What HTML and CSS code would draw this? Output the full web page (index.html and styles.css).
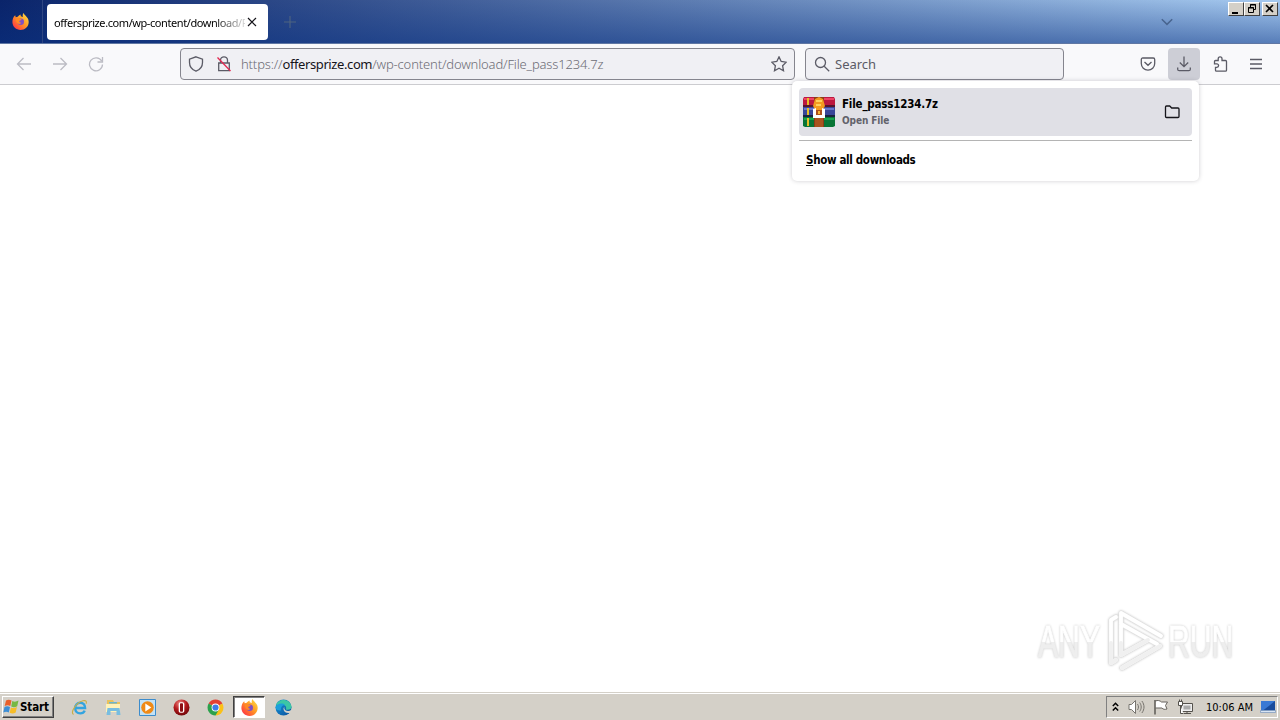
FILE: index.html
```
<!DOCTYPE html>
<html lang="en">
<head>
    <meta charset="UTF-8">
    <meta name="viewport" content="width=device-width, initial-scale=1.0">
    <title>Downloads</title>
    <link rel="stylesheet" href="styles.css">
</head>
<body>
    <!-- shared icon shapes -->
    <svg class="defs" width="0" height="0">
        <defs>
            <linearGradient id="flame" x1="1" y1="0" x2="0" y2="1">
                <stop offset="0" stop-color="#ffe84a"/>
                <stop offset=".45" stop-color="#ff9a25"/>
                <stop offset=".8" stop-color="#ff4a3d"/>
                <stop offset="1" stop-color="#e8306c"/>
            </linearGradient>
            <linearGradient id="edgeBlue" x1="0" y1="0" x2="1" y2="1">
                <stop offset="0" stop-color="#1796d8"/>
                <stop offset="1" stop-color="#0b4f9c"/>
            </linearGradient>
            <radialGradient id="operaRed" cx=".4" cy=".25" r=".8">
                <stop offset="0" stop-color="#ef8580"/>
                <stop offset=".5" stop-color="#b3191c"/>
                <stop offset="1" stop-color="#6b0508"/>
            </radialGradient>
            <symbol id="firefox" viewBox="0 0 16 16">
                <path fill="url(#flame)" d="M.4 9C.2 6 1.3 3.4 3 2l.5 2 1.8-.4C6 2.5 7 1.8 8 1.4L8.3 3l2 .8C9.8 2.3 10.1.8 11 0c.4 1.7 1.8 2.3 3 3.9 1.2 1.2 1.8 3 1.7 4.8C15.5 13 12.2 16 8 16S.7 13 .4 9z"/>
                <circle cx="8.2" cy="8.3" r="3.1" fill="#8050c4"/>
                <path fill="#ff8a24" d="M3.4 5.2c1.4-.8 2.9-.6 4 .3l1.6.4c-.2 1-1.1 1.2-1.9 1.5-.8.5.2 1.8 1.5 1.8-.6 1.600-3.200 1.500-4.200-.4-.6-1-.9-2.200-1-3.600z"/>
            </symbol>
        </defs>
    </svg>

    <div class="window">
        <div class="titlebar">
            <div class="brand"><svg width="17" height="17"><use href="#firefox"/></svg></div>
            <div class="tab">
                <span class="tab-title">offersprize.com/wp-content/download/F</span>
                <svg width="10" height="10" viewBox="0 0 10 10"><path d="M1 1l8 8M9 1L1 9" stroke="#15141a" stroke-width="1.2"/></svg>
            </div>
            <svg class="new-tab" width="12" height="12" viewBox="0 0 12 12"><path d="M6 0v12M0 6h12" stroke="#4f6480" stroke-width="1.1"/></svg>
            <svg class="all-tabs" width="12" height="8" viewBox="0 0 12 8"><path d="M.8 1.2L6 6.4l5.2-5.2" fill="none" stroke="#49658f" stroke-width="1.5"/></svg>
            <div class="controls">
                <span class="ctl"><svg width="14" height="12" viewBox="0 0 14 12"><path d="M3 9h6v2H3z"/></svg></span>
                <span class="ctl"><svg width="14" height="12" viewBox="0 0 14 12" fill="none" stroke="#000"><path d="M5.500 4V1.500h5v5H9M5 2h6M3.500 4.500h5v5h-5zM3 5h6"/></svg></span>
                <span class="ctl close"><svg width="14" height="12" viewBox="0 0 14 12"><path d="M3 2l7 7M10 2L3 9" stroke="#000" stroke-width="1.6"/></svg></span>
            </div>
        </div>

        <div class="toolbar">
            <div class="nav">
                <svg width="16" height="16" viewBox="0 0 16 16"><path d="M15 8H1.500M7.500 2l-6 6 6 6"/></svg>
                <svg width="16" height="16" viewBox="0 0 16 16"><path d="M1 8h13.500M8.500 2l6 6-6 6"/></svg>
                <svg width="16" height="16" viewBox="0 0 16 16"><path d="M13.600 5A6.500 6.500 0 1 0 14.500 8.500M14.500 1v5h-5"/></svg>
            </div>
            <div class="field url">
                <svg class="shield" width="16" height="16" viewBox="0 0 16 16"><path d="M8 .8l6.500 2.400v3.300c0 4-2.500 7.200-6.500 8.700-4-1.500-6.500-4.700-6.500-8.700V3.200z"/></svg>
                <svg class="lock" width="16" height="16" viewBox="0 0 16 16"><path d="M4.500 7V4.300a3.500 3.500 0 0 1 7 0V7M2.700 7h10.600v7.700H2.700z"/><path class="strike" d="M1.500 1.500l13 13.500"/></svg>
                <span class="address">https://<b>offersprize.com</b>/wp-content/download/File_pass1234.7z</span>
                <svg class="star" width="16" height="16" viewBox="0 0 16 16"><path d="M8 .9l2.200 4.600 5 .7-3.600 3.500.9 5L8 12.300l-4.500 2.400.9-5L.8 6.200l5-.7z"/></svg>
            </div>
            <div class="field search">
                <svg width="16" height="16" viewBox="0 0 16 16"><circle cx="6.500" cy="6.500" r="5"/><path d="M10.200 10.200l5 5"/></svg>
                <span>Search</span>
            </div>
            <div class="actions">
                <span class="action"><svg width="16" height="16" viewBox="0 0 16 16"><path d="M2.800 2h10.400c.9 0 1.500.6 1.500 1.500v4a6.700 6.700 0 0 1-13.400 0v-4C1.300 2.600 1.900 2 2.800 2zM4.500 6L8 9.300 11.500 6"/></svg></span>
                <span class="action active"><svg width="16" height="16" viewBox="0 0 16 16"><path d="M8 .5v10M3.800 6.500L8 10.700l4.200-4.200M1.700 11.500v1.700c0 .9.600 1.500 1.500 1.500h9.600c.9 0 1.500-.6 1.500-1.500v-1.700"/></svg></span>
                <span class="action"><svg width="16" height="16" viewBox="0 0 16 16"><path d="M6.200 4.500V2.800a1.900 1.900 0 0 1 3.800 0v1.700h3.500c.6 0 1 .4 1 1v8.700c0 .6-.4 1-1 1h-9c-.6 0-1-.4-1-1v-2.900h1.400a1.700 1.700 0 0 0 0-3.400H2.500v-2.400c0-.6.400-1 1-1z"/></svg></span>
                <span class="action"><svg width="16" height="16" viewBox="0 0 16 16"><path d="M2 3.500h12M2 8h12M2 12.500h12"/></svg></span>
            </div>
        </div>

        <div class="page"></div>

        <div class="taskbar">
            <div class="start">
                <svg width="17" height="16" viewBox="0 0 17 16">
                    <path fill="#e8602c" d="M3 1.500c2-1.200 3.700-1 5.500 0L7.300 7C5.500 6 3.700 6 1.700 7.100z"/>
                    <path fill="#77b843" d="M9.300 2c2 1 3.700.9 6.200-.4L14.200 7.200c-2.300 1.200-4 1.200-6 .2z"/>
                    <path fill="#3c8ed6" d="M1.500 8c2-1.200 3.700-1 5.500 0l-1.200 5.400c-1.800-1-3.500-1-5.500.1z"/>
                    <path fill="#f7bd28" d="M7.900 8.400c2 1 3.700.9 6-.3l-1.200 5.500c-2.200 1.200-4 1.200-6 .2z"/>
                </svg>
                <span>Start</span>
            </div>
            <div class="apps">
                <span class="app"><svg width="17" height="17" viewBox="0 0 17 17" fill="none">
                    <path d="M4.200 9h9.900c0-3.200-2-5.200-4.900-5.200S4.200 6 4.200 9.200s2 5.200 5 5.200c2.200 0 3.800-1 4.500-2.800" stroke="#33a4e0" stroke-width="2.400"/>
                    <path d="M2.500 15.500C-1 13 5.500 3.500 12 1.800c3-.7 4 .5 3 3" stroke="#c9ae45" stroke-width="1.100"/>
                </svg></span>
                <span class="app"><svg width="17" height="17" viewBox="0 0 17 17">
                    <path fill="#e9c25c" d="M2 1h6l1 2h6v9H2z"/>
                    <path fill="#fff2b8" d="M1 5h14v8H1z"/>
                    <path fill="#6bb6cf" d="M4 3h8v1.500H4z"/>
                    <path fill="#78bde0" d="M2.500 9h12l1 7h-4v-4h-6v4h-4z"/>
                </svg></span>
                <span class="app"><svg width="17" height="17" viewBox="0 0 17 17">
                    <path fill="#c3e2f6" stroke="#3c8ccc" d="M.5.500h16v16H.5z"/>
                    <circle cx="8.500" cy="8.500" r="6.300" fill="#f08a16"/>
                    <path fill="#fff" d="M6.300 4.500l6 4-6 4z"/>
                </svg></span>
                <span class="app"><svg width="17" height="17" viewBox="0 0 17 17">
                    <circle cx="8.500" cy="8.500" r="8" fill="url(#operaRed)"/>
                    <rect x="5.700" y="3.300" width="5.600" height="10.500" rx="1.800" fill="#fff"/>
                    <rect x="7" y="4.300" width="3" height="8.500" rx=".8" fill="#8c0e13"/>
                </svg></span>
                <span class="app"><svg width="17" height="17" viewBox="0 0 17 17">
                    <path fill="#e34133" d="M8.500 8.500L1.600 4.500a8 8 0 0 1 13.800 0z"/>
                    <path fill="#fbc116" d="M8.500 8.500l6.900-4a8 8 0 0 1-6.900 12z"/>
                    <path fill="#2ca14c" d="M8.500 8.500l3.500 2-3.500 6a8 8 0 0 1-6.900-12z"/>
                    <circle cx="8.500" cy="8.500" r="3.900" fill="#fff"/>
                    <circle cx="8.500" cy="8.500" r="3.100" fill="#3f7de8"/>
                </svg></span>
                <span class="app current"><svg width="17" height="17"><use href="#firefox"/></svg></span>
                <span class="app"><svg width="17" height="17" viewBox="0 0 17 17">
                    <circle cx="8.500" cy="8.500" r="8" fill="url(#edgeBlue)"/>
                    <path fill="#3bc6a5" d="M1 6.500C3-.7 14.500-1 16.500 7.300c.3 3-2.300 4-5.700 3.300.9-2 .2-4.100-2-4.600-3-.7-6 .2-7.800.5z"/>
                    <path fill="#1c9edb" d="M.5 8.500C1.500 4.500 7.500 3.200 10 6c-3 .2-4.500 2.600-4 5.500C3 12 1 10.500.5 8.500z"/>
                    <path fill="#d5d1c9" d="M9.500 8c-.8 1.500.5 3.700 3 3.900 1.400.1 2.600-.2 4-1.200l.5 1.800-1.500 1.300c-3.800 1-7-1-7-3.800 0-1 .4-1.700 1-2z"/>
                </svg></span>
            </div>
            <div class="tray">
                <svg class="more" width="7" height="11" viewBox="0 0 7 11"><path d="M.8 4l2.700-2.700L6.200 4M.8 8.500l2.700-2.700 2.700 2.700" fill="none" stroke="#000" stroke-width="1.500"/></svg>
                <svg width="17" height="16" viewBox="0 0 17 16" fill="none" stroke="#77746e"><path fill="#fff" d="M1 5.500h2.500L7.500 1.500v13l-4-4H1z"/><path d="M9.500 5c1.300 2 1.300 4 0 6M11.700 3.500c2 3 2 6 0 9M13.900 2c2.800 4 2.800 8 0 12"/></svg>
                <svg width="16" height="16" viewBox="0 0 16 16"><path fill="#fff" stroke="#66635e" d="M2.500 2c2-1 4.500-.5 6 1h6l-2 3.500 1.500 3.500c-2 .6-4 .5-5-1H2.500"/><path stroke="#55524d" stroke-width="1.400" d="M2 1v14.500"/></svg>
                <svg width="17" height="16" viewBox="0 0 17 16" stroke="#55524d"><path fill="#eee" d="M4.500 4.500h11v8h-11zM7 14.500h7M10 12.500v2"/><path fill="#aaa" stroke="none" d="M6.500 6.500h7v4h-7z"/><path fill="#fff" d="M1.500 2.500h4v4h-4zM2.500.500v2M4.500.500v2M3.500 6.500v8h3"/></svg>
                <span class="clock">10:06 AM</span>
                <svg width="16" height="14" viewBox="0 0 16 14"><path fill="#194c9c" d="M1 1h14v9.500H1z"/><path fill="#3979d4" d="M1 1h14L3 10.500H1z"/><path fill="#d9e5f4" stroke="#6989b5" stroke-width=".6" d="M.5 10.500h15v2H.5z"/></svg>
            </div>
        </div>
    </div>

    <!-- downloads popup -->
    <div class="popup">
        <div class="item">
            <svg width="32" height="32" viewBox="0 0 32 32">
                <path fill="#bb1840" d="M1 1h30l1 2v7H0V3z"/><path fill="#ed4264" d="M1 2h30v2H1z"/>
                <path fill="#394699" d="M0 11h32v9H0z"/><path fill="#6775cc" d="M1 12h30v2H1z"/>
                <path fill="#087536" d="M0 21h32v9l-2 1H2l-2-1z"/><path fill="#18a24d" d="M1 22h30v2H1z"/>
                <path fill="#55152d" d="M0 9h32v2H0z"/><path fill="#18243f" d="M0 19h32v2H0z"/>
                <path stroke="#e6be25" stroke-width="2" d="M5 2v7M5 12v7M5 22v8"/>
                <path fill="#8c3d17" d="M11 1h10v30H11z"/>
                <path fill="#a95420" d="M12 22h8v9h-8z"/>
                <path fill="#f39a20" d="M12 3l4-2 4 2 2 7-3 5h-6l-3-5z"/>
                <path fill="#ffd05c" d="M13 4h6v2h-6zM13 8h5v2h-5z"/>
                <path fill="#fff" d="M10 13l3-1v3h6v-3l3 1v9H10z"/>
                <path fill="#ac4f1c" d="M13 14h6v5h-6z"/>
                <path fill="#f7b334" d="M15 15h2v3h-2z"/>
            </svg>
            <div class="info">
                <div class="name">File_pass1234.7z</div>
                <div class="status">Open File</div>
            </div>
            <svg class="folder" width="16" height="16" viewBox="0 0 16 16"><path d="M2.500 2h3.200l2 2H14c.5 0 1 .4 1 1v7.500c0 .6-.5 1-1 1H2.500c-.6 0-1-.4-1-1V3c0-.6.400-1 1-1z" fill="none" stroke="#15141a" stroke-width="1.300"/></svg>
        </div>
        <div class="show-all"><u>S</u>how all downloads</div>
    </div>

    <!-- watermark -->
    <div class="watermark">
        <span class="any">ANY</span>
        <svg width="58" height="64" viewBox="0 0 58 64" fill="none" stroke-linejoin="round" stroke-linecap="round">
            <path stroke="#e2e2e2" stroke-width="5" d="M9 8L4 11v43l5-3M14 46V4l40 23M14 15l36 20M14 46l27-15M15 59l38-22"/>
            <path stroke="#fff" stroke-width="3.800" d="M9 8L4 11v43l5-3M14 46V4l40 23M14 15l36 20M14 46l27-15M15 59l38-22"/>
            <path stroke="#f0f0f0" stroke-width="3.800" d="M14 34v12l27-15M15 59l38-22M4 34v20l5-3"/>
        </svg>
        <span class="run">RUN</span>
    </div>
</body>
</html>
```
FILE: styles.css
```
*{
    margin: 0px;
    padding: 0px;
    box-sizing: border-box;
}

body{
    width: 1280px;
    height: 720px;
    overflow: hidden;
    font-family: "DejaVu Sans Condensed", "DejaVu Sans", sans-serif;
    font-stretch: condensed;
    font-size: 11px;
    color: #000;
    background-color: white;
}

svg{
    display: block;
    flex: none;
}

.defs{
    position: absolute;
}

.window{
    height: 720px;
    display: flex;
    flex-direction: column;
}

/* title bar */
.titlebar{
    height: 44px;
    display: flex;
    align-items: center;
    border-bottom: 1px solid #6077a3;
    background: linear-gradient(to bottom, rgba(10, 36, 106, 0) 0%, rgba(10, 50, 130, 0.5) 100%), linear-gradient(to right, #0a246a, #a6caf0);
}

.brand{
    width: 43px;
    height: 43px;
    padding: 13px 0px 0px 12px;
    border-right: 1px solid #2e4682;
}

.tab{
    width: 221px;
    height: 36px;
    margin-left: 4px;
    padding: 0px 11px 0px 7px;
    display: flex;
    align-items: center;
    justify-content: space-between;
    border-radius: 4px;
    background-color: white;
}

.tab-title{
    width: 191px;
    padding-top: 1px;
    white-space: nowrap;
    font-family: "Noto Sans", sans-serif;
    font-size: 11px;
    letter-spacing: -0.42px;
    -webkit-mask-image: linear-gradient(to right, #000 160px, transparent 196px);
    mask-image: linear-gradient(to right, #000 160px, transparent 196px);
}

.new-tab{
    margin-left: 16px;
}

.all-tabs{
    margin-left: auto;
    margin-right: 55px;
}

.controls{
    display: flex;
    align-self: flex-start;
    margin: 2px 2px 0px 0px;
}

.ctl{
    width: 16px;
    height: 14px;
    border: 1px solid;
    border-color: #fff #404040 #404040 #fff;
    background-color: #d4d0c8;
}

.close{
    margin-left: 2px;
}

/* toolbar */
.toolbar{
    height: 41px;
    display: flex;
    align-items: center;
    border-bottom: 1px solid #ccccd0;
    background-color: #f9f9fb;
}

.toolbar svg{
    fill: none;
    stroke: #5b5b66;
    stroke-width: 1.3;
}

.nav{
    width: 180px;
    display: flex;
    gap: 20px;
    padding-left: 16px;
}

.toolbar .nav svg{
    stroke: #bcbcc4;
}

.field{
    height: 32px;
    display: flex;
    align-items: center;
    border: 1px solid #85858e;
    border-radius: 4px;
    background-color: #f0f0f4;
    font-family: "Noto Sans", sans-serif;
    font-size: 13px;
    color: #5b5b66;
}

.url{
    width: 615px;
    padding: 0px 7px;
}

.lock{
    margin-left: 12px;
}

.toolbar .strike{
    stroke: #e22850;
    stroke-width: 1.3;
}

.address{
    margin-left: 9px;
    white-space: nowrap;
    font-weight: 300;
    letter-spacing: -0.15px;
    color: #6c6c75;
}

.address b{
    font-weight: 400;
    letter-spacing: -0.4px;
    color: #15141a;
}

.star{
    margin-left: auto;
}

.search{
    width: 259px;
    margin-left: 10px;
    padding-left: 8px;
    gap: 5px;
}

.actions{
    display: flex;
    gap: 4px;
    margin-left: auto;
    margin-right: 8px;
}

.action{
    width: 32px;
    height: 32px;
    padding: 8px;
    border-radius: 4px;
}

.active{
    background-color: #cdced6;
}

.page{
    flex: 1;
}

/* downloads popup */
.popup{
    position: absolute;
    left: 792px;
    top: 81px;
    width: 407px;
    height: 100px;
    padding: 7px;
    border-radius: 5px;
    background-color: white;
    box-shadow: 0px 0px 4px rgba(58, 57, 68, 0.25);
    font-weight: bold;
}

.item{
    height: 48px;
    padding: 0px 12px 0px 4px;
    display: flex;
    align-items: center;
    border-radius: 4px;
    background-color: #e0e0e6;
}

.info{
    margin-left: 7px;
}

.name{
    line-height: 17px;
    font-size: 11.5px;
    letter-spacing: -0.2px;
}

.status{
    line-height: 16px;
    font-size: 10px;
    letter-spacing: -0.1px;
    color: #62626b;
}

.folder{
    margin-left: auto;
}

.show-all{
    height: 39px;
    margin-top: 4px;
    padding-left: 7px;
    line-height: 38px;
    font-size: 11.5px;
    letter-spacing: -0.33px;
    border-top: 1px solid #b4b4b4;
}

/* watermark */
.watermark{
    position: absolute;
    left: 1038px;
    top: 608px;
    width: 196px;
    height: 66px;
    display: flex;
    align-items: center;
    font-family: "Liberation Sans", sans-serif;
    font-size: 45px;
    line-height: 66px;
    filter: drop-shadow(0px 0px 1px rgba(0, 0, 0, 0.22));
}

.watermark span{
    flex: none;
    padding-top: 2px;
    transform: scaleX(0.67);
    transform-origin: left;
    background: linear-gradient(to bottom, #fff 52%, #eee 52%);
    -webkit-background-clip: text;
    background-clip: text;
    -webkit-text-stroke: 1px transparent;
    color: transparent;
    white-space: nowrap;
}

.watermark .any{
    width: 100px;
    margin-right: -31px;
}

.watermark .run{
    width: 110px;
    margin-left: 3px;
}

/* taskbar */
.taskbar{
    height: 28px;
    padding-top: 1px;
    display: flex;
    align-items: center;
    border-top: 1px solid #d4d0c8;
    box-shadow: inset 0px 1px 0px white;
    background-color: #d4d0c8;
}

.start{
    width: 52px;
    height: 22px;
    margin-left: 2px;
    display: flex;
    align-items: center;
    border: 1px solid;
    border-color: white #404040 #404040 white;
    box-shadow: inset -1px -1px 0px #808080;
    font-weight: bold;
    font-size: 11.5px;
    letter-spacing: -0.1px;
}

.apps{
    display: flex;
    gap: 2px;
    margin-left: 9px;
}

.app{
    width: 32px;
    height: 22px;
    display: flex;
    align-items: center;
    justify-content: center;
}

.current{
    border: 1px solid;
    border-color: #404040 white white #404040;
    box-shadow: inset 1px 1px 0px #808080;
    background-color: white;
}

.tray{
    width: 172px;
    height: 22px;
    margin-left: auto;
    margin-right: 2px;
    padding-left: 5px;
    display: flex;
    align-items: center;
    gap: 8px;
    border: 1px solid;
    border-color: #808080 white white #808080;
}

.more{
    margin-right: 1px;
}

.clock{
    margin-left: 4px;
    margin-right: -1px;
    white-space: nowrap;
}
```
